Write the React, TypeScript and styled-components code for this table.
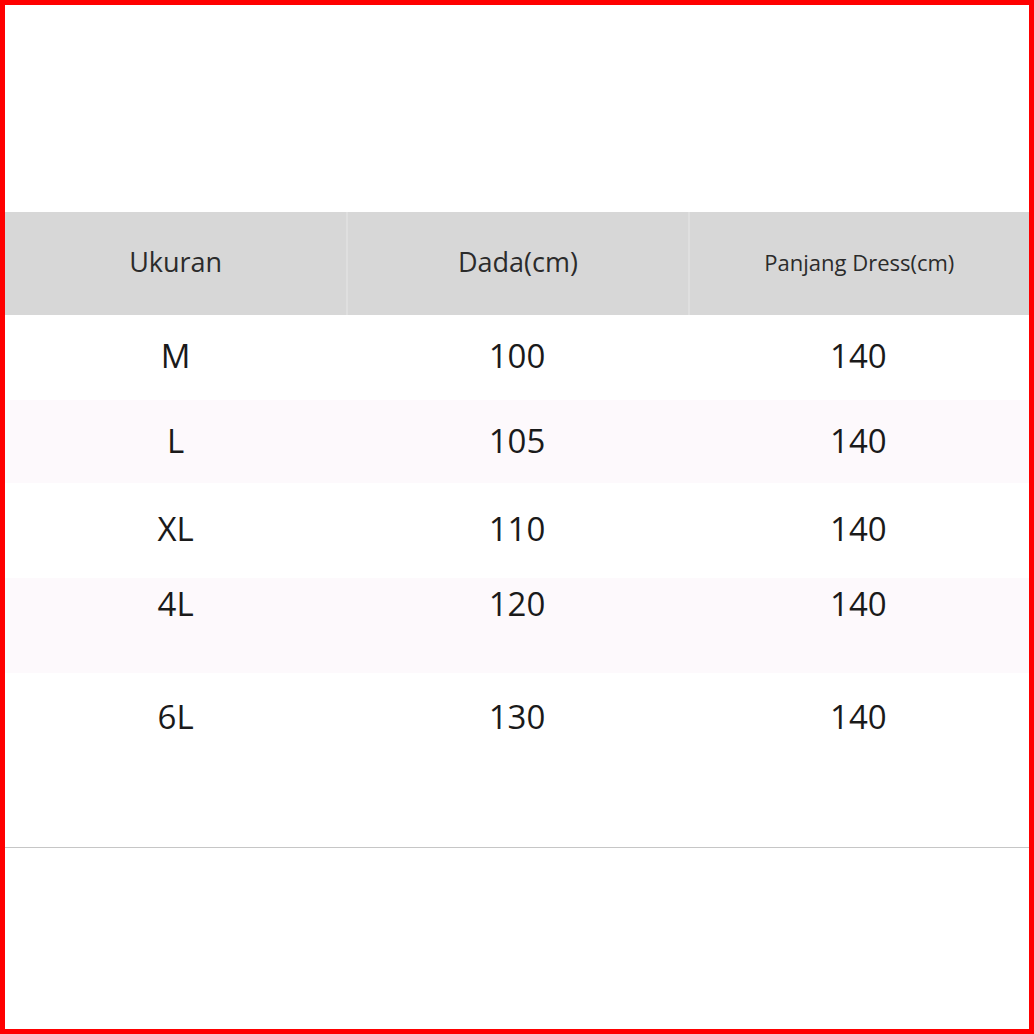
import styled, { createGlobalStyle } from 'styled-components';

const GlobalStyle = createGlobalStyle`
  html, body {
    margin: 0;
    padding: 0;
    background: #ffffff;
  }
  * {
    box-sizing: border-box;
  }
`;

interface SizeRow {
  size: string;
  chest: string;
  length: string;
  height: number;
  padBottom: number;
  tinted: boolean;
}

const rows: SizeRow[] = [
  { size: 'M', chest: '100', length: '140', height: 85, padBottom: 4, tinted: false },
  { size: 'L', chest: '105', length: '140', height: 83, padBottom: 2, tinted: true },
  { size: 'XL', chest: '110', length: '140', height: 95, padBottom: 4, tinted: false },
  { size: '4L', chest: '120', length: '140', height: 95, padBottom: 44, tinted: true },
  { size: '6L', chest: '130', length: '140', height: 174, padBottom: 88, tinted: false },
];

const Frame = styled.div`
  width: 1034px;
  height: 1034px;
  border: 5px solid #ff0000;
  background: #ffffff;
  padding-top: 207px;
  font-family: 'Open Sans', 'Noto Sans', sans-serif;
`;

const Table = styled.div`
  display: flex;
  flex-direction: column;
  border-bottom: 1px solid #c6c6c6;
`;

const HeaderRow = styled.div`
  display: grid;
  grid-template-columns: repeat(3, 1fr);
  height: 103px;
  background: #d7d7d7;
`;

const HeaderCell = styled.div<{ $small?: boolean; $divider?: boolean }>`
  display: flex;
  align-items: center;
  justify-content: center;
  padding-bottom: 4px;
  font-size: ${props => props.$small ? '22px' : '27px'};
  color: #2b2b2b;
  border-left: ${props => props.$divider ? '2px solid #dfdfdf' : 'none'};
`;

const Row = styled.div<{ $height: number; $padBottom: number; $tinted: boolean }>`
  display: grid;
  grid-template-columns: repeat(3, 1fr);
  align-items: center;
  height: ${props => props.$height}px;
  padding-bottom: ${props => props.$padBottom}px;
  background: ${props => props.$tinted ? '#fdf9fc' : '#ffffff'};
`;

const Cell = styled.div`
  text-align: center;
  font-size: 33px;
  line-height: 1;
  color: #1a1a1a;
`;

export default function App() {
  return (
    <>
      <GlobalStyle />
      <Frame>
        <Table>
          <HeaderRow>
            <HeaderCell>Ukuran</HeaderCell>
            <HeaderCell $divider>Dada(cm)</HeaderCell>
            <HeaderCell $divider $small>Panjang Dress(cm)</HeaderCell>
          </HeaderRow>
          {rows.map(row => (
            <Row
              key={row.size}
              $height={row.height}
              $padBottom={row.padBottom}
              $tinted={row.tinted}
            >
              <Cell>{row.size}</Cell>
              <Cell>{row.chest}</Cell>
              <Cell>{row.length}</Cell>
            </Row>
          ))}
        </Table>
      </Frame>
    </>
  );
}
